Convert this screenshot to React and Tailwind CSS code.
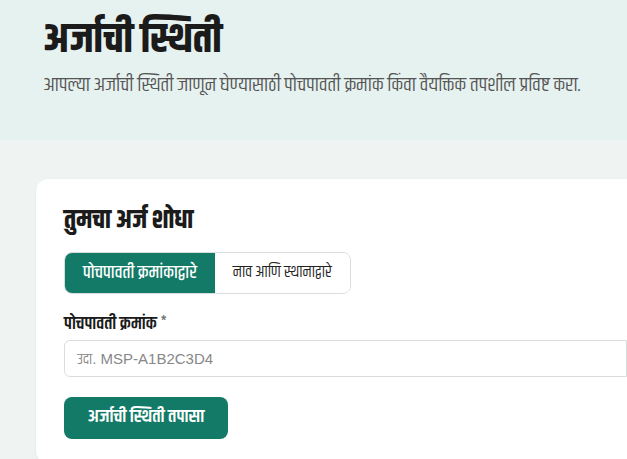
import { useState } from 'react'

const tabs = [
  { id: 'receipt', label: 'पोचपावती क्रमांकाद्वारे' },
  { id: 'name', label: 'नाव आणि स्थानाद्वारे' },
]

const App = () => {
  const [mode, setMode] = useState('receipt')

  return (
    <div className="min-h-screen bg-[#eff3f2] font-['Khand','Noto_Sans_Devanagari',sans-serif]">
      <header className="bg-[#e6f2f0] h-[140px] pl-[43px] pt-[14px]">
        <h1 className="text-[42px] font-bold text-[#1b1b1b] leading-[52px]">अर्जाची स्थिती</h1>
        <p className="mt-[6px] text-[20px] text-[#555] leading-7 whitespace-nowrap">
          आपल्या अर्जाची स्थिती जाणून घेण्यासाठी पोचपावती क्रमांक किंवा वैयक्तिक तपशील प्रविष्ट करा.
        </p>
      </header>

      <main className="pl-[36px] pt-[39px]">
        <div className="bg-white rounded-l-xl shadow-[0_1px_3px_rgba(0,0,0,0.06)] pl-[28px] pt-[26px] pb-6">
          <h2 className="text-[26px] font-bold text-[#1b1b1b] leading-8">तुमचा अर्ज शोधा</h2>

          <div className="mt-[15px] inline-flex border border-[#d9dedd] rounded-lg overflow-hidden h-[42px]">
            {tabs.map(t => (
              <button
                key={t.id}
                onClick={() => setMode(t.id)}
                className={`px-[18px] ${mode === t.id ? 'bg-[#127a66] text-white text-[18px] font-medium' : 'bg-white text-[#222] text-[16px] font-normal'}`}
              >
                {t.label}
              </button>
            ))}
          </div>

          <label className="flex items-start gap-1 mt-[20px] text-[18px] font-semibold text-[#1b1b1b] leading-5">
            पोचपावती क्रमांक <span className="text-[11px] text-[#777] leading-4">*</span>
          </label>
          <input
            placeholder="उदा. MSP-A1B2C3D4"
            className="mt-[6px] block w-full h-[37px] border border-[#d9dedd] rounded-l-md px-[12px] text-[15px] font-['Liberation_Sans','Khand',sans-serif] placeholder:text-[#888] outline-none"
          />

          <button className="mt-[20px] h-[42px] w-[164px] rounded-lg bg-[#127a66] text-white text-[18.5px] font-semibold">
            अर्जाची स्थिती तपासा
          </button>
        </div>
      </main>
    </div>
  )
}

export default App
